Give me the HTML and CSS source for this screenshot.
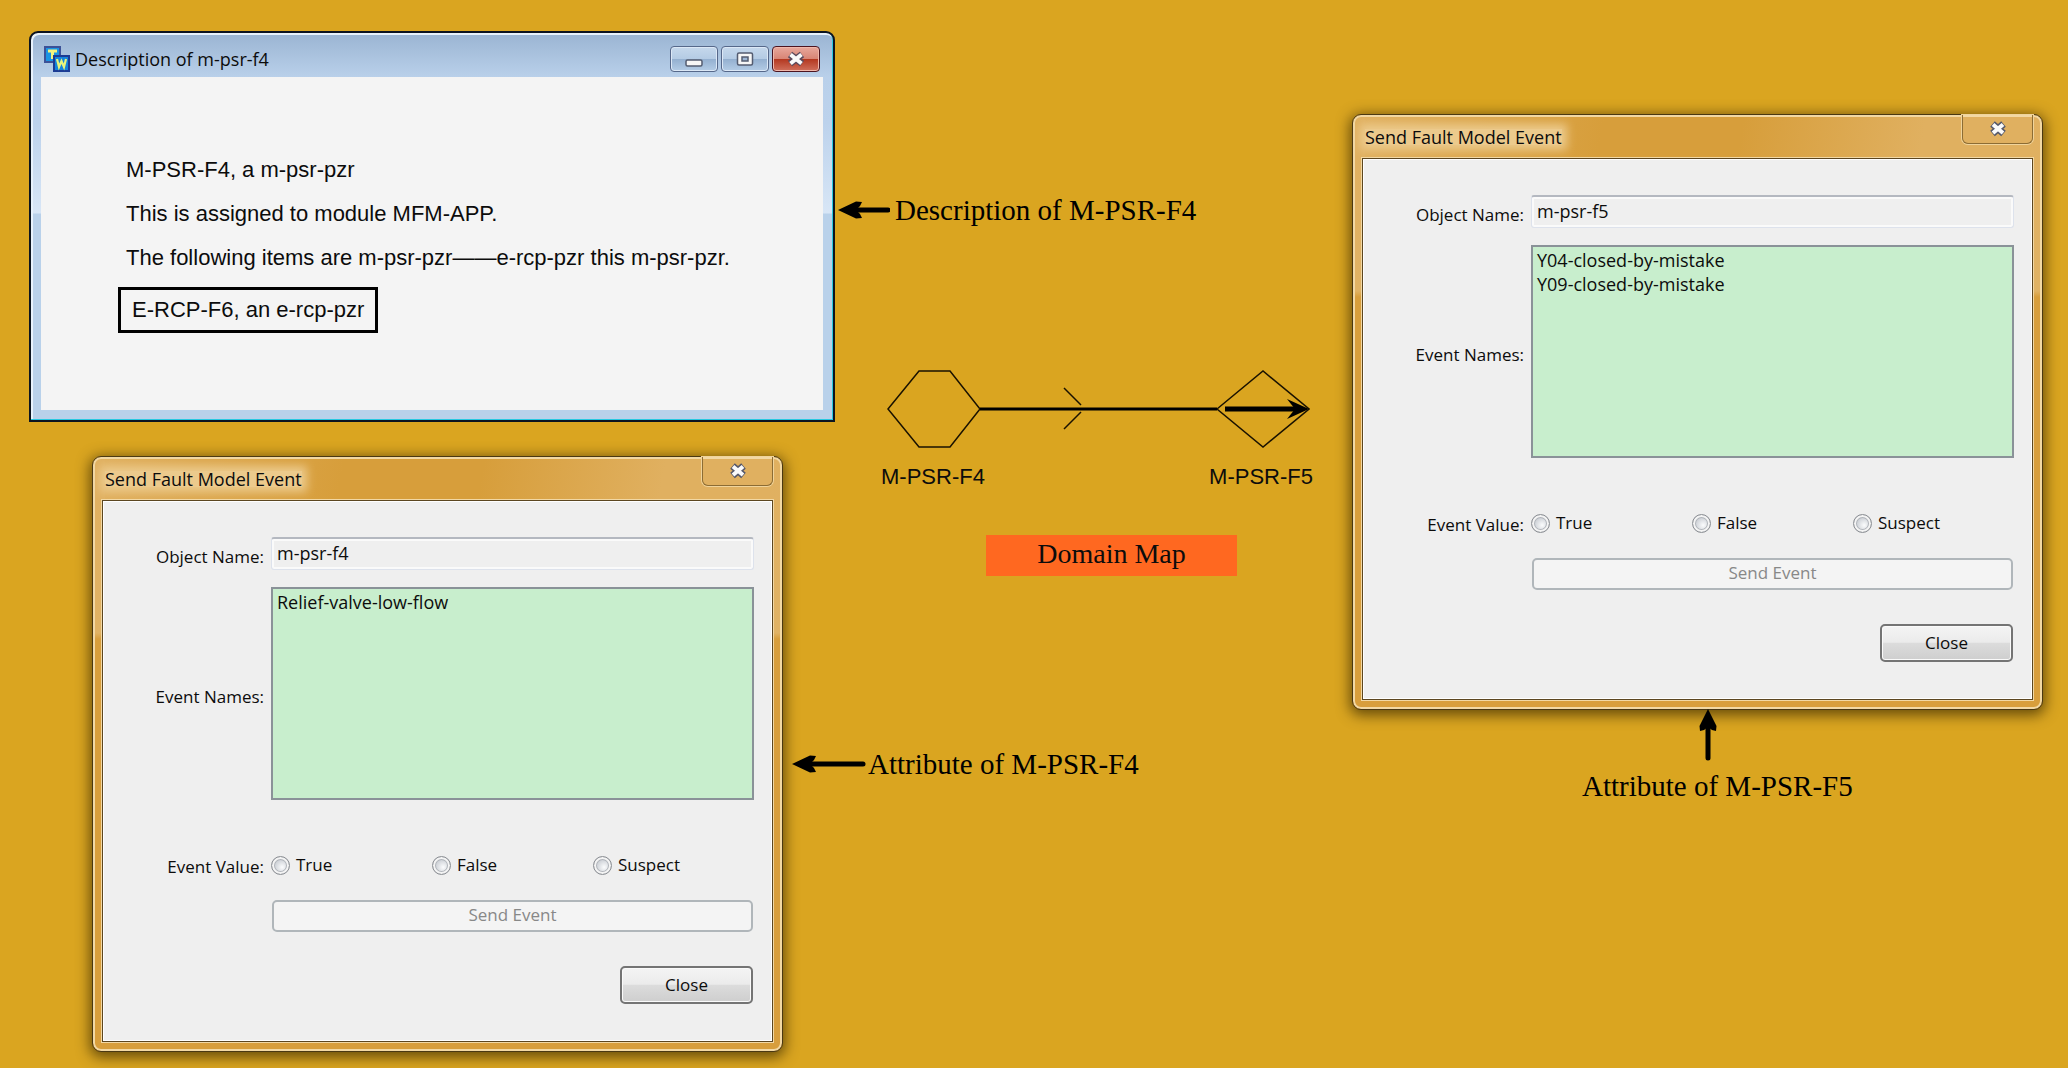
FILE: index.html
```html
<!DOCTYPE html>
<html lang="en">
<head>
<meta charset="utf-8">
<title>Domain Map</title>
<link rel="stylesheet" href="styles.css">
</head>
<body>
<main class="desktop">

  <section class="window window-description">
    <header class="window-bar">
      <svg class="app-icon" width="26" height="26" viewBox="0 0 26 26" aria-hidden="true">
        <rect x="1" y="1" width="15" height="15" fill="#1a94e4" stroke="#3c5298" stroke-width="2"/>
        <path d="M4 5h9M8.500 5v8" fill="none" stroke="#f4f47c" stroke-width="3"/>
        <rect x="10" y="10" width="15" height="15" fill="#1484dc" stroke="#1c3c94" stroke-width="2"/>
        <path d="M13 13l2 8 2.500-6 2.500 6 2-8" fill="none" stroke="#e8f47c" stroke-width="2.200"/>
      </svg>
      <h2 class="window-title">Description of m-psr-f4</h2>
      <div class="window-controls">
        <button class="control" type="button" aria-label="Minimize">
          <svg width="18" height="20" viewBox="0 0 18 20"><rect x="1" y="11" width="16" height="6" rx="1.500" fill="#f6f6f6" stroke="#545c70" stroke-width="1.500"/></svg>
        </button>
        <button class="control" type="button" aria-label="Maximize">
          <svg width="18" height="20" viewBox="0 0 18 20"><rect x="1.500" y="4" width="15" height="12" rx="1.500" fill="#f6f6f6" stroke="#545c70" stroke-width="1.500"/><rect x="6" y="8" width="6" height="4" fill="#9db6d4" stroke="#545c70" stroke-width="1.500"/></svg>
        </button>
        <button class="control control-close" type="button" aria-label="Close window">
          <svg width="20" height="20" viewBox="0 0 20 20"><path d="M4 5.500l12 9M16 5.500l-12 9" stroke="#5a4a5c" stroke-width="7"/><path d="M4.500 5.500l11 9M15.500 5.500l-11 9" stroke="#fafafa" stroke-width="4"/></svg>
        </button>
      </div>
    </header>
    <div class="description-body">
      <p>M-PSR-F4, a m-psr-pzr</p>
      <p>This is assigned to module MFM-APP.</p>
      <p>The following items are m-psr-pzr——e-rcp-pzr this m-psr-pzr.</p>
      <p class="boxed">E-RCP-F6, an e-rcp-pzr</p>
    </div>
  </section>

  <section class="dialog dialog-f4">
    <header class="dialog-bar">
      <h2 class="dialog-title">Send Fault Model Event</h2>
      <button class="dialog-x" type="button" aria-label="Close dialog">
        <svg width="20" height="18" viewBox="0 0 20 18"><path d="M4.500 4l11 9.500M15.500 4l-11 9.500" stroke="#55586a" stroke-width="7"/><path d="M5 4.500l10 8.500M15 4.500l-10 8.500" stroke="#fafafa" stroke-width="4"/></svg>
      </button>
    </header>
    <form class="dialog-form">
      <label class="name-label" for="name-f4">Object Name:</label>
      <input class="name-input" id="name-f4" type="text" value="m-psr-f4" readonly>
      <label class="events-label" for="events-f4">Event Names:</label>
      <select class="events-list" id="events-f4" size="9">
        <option>Relief-valve-low-flow</option>
      </select>
      <span class="value-label" id="value-f4">Event Value:</span>
      <div class="value-options" role="radiogroup" aria-labelledby="value-f4">
        <label><input type="radio" name="value-f4">True</label>
        <label><input type="radio" name="value-f4">False</label>
        <label><input type="radio" name="value-f4">Suspect</label>
      </div>
      <button class="send-button" type="button" disabled>Send Event</button>
      <button class="close-button" type="button">Close</button>
    </form>
  </section>

  <section class="dialog dialog-f5">
    <header class="dialog-bar">
      <h2 class="dialog-title">Send Fault Model Event</h2>
      <button class="dialog-x" type="button" aria-label="Close dialog">
        <svg width="20" height="18" viewBox="0 0 20 18"><path d="M4.500 4l11 9.500M15.500 4l-11 9.500" stroke="#55586a" stroke-width="7"/><path d="M5 4.500l10 8.500M15 4.500l-10 8.500" stroke="#fafafa" stroke-width="4"/></svg>
      </button>
    </header>
    <form class="dialog-form">
      <label class="name-label" for="name-f5">Object Name:</label>
      <input class="name-input" id="name-f5" type="text" value="m-psr-f5" readonly>
      <label class="events-label" for="events-f5">Event Names:</label>
      <select class="events-list" id="events-f5" size="9">
        <option>Y04-closed-by-mistake</option>
        <option>Y09-closed-by-mistake</option>
      </select>
      <span class="value-label" id="value-f5">Event Value:</span>
      <div class="value-options" role="radiogroup" aria-labelledby="value-f5">
        <label><input type="radio" name="value-f5">True</label>
        <label><input type="radio" name="value-f5">False</label>
        <label><input type="radio" name="value-f5">Suspect</label>
      </div>
      <button class="send-button" type="button" disabled>Send Event</button>
      <button class="close-button" type="button">Close</button>
    </form>
  </section>

  <figure class="map">
    <svg class="map-drawing" width="424" height="80" viewBox="0 0 424 80" aria-hidden="true">
      <g fill="none" stroke="#1a1200" stroke-width="1.500">
        <path d="M2 40L33 2H64L94 40L64 78H33Z"/>
        <path d="M178 19l17 17M195 43l-17 17"/>
        <path d="M331 40L377 2L423 40L377 78Z"/>
      </g>
      <path d="M94 40H331" stroke="#000" stroke-width="3"/>
      <path d="M339 40H414" stroke="#000" stroke-width="5"/>
      <path d="M401 30L423 40L401 50L409 40Z"/>
    </svg>
    <div class="map-labels"><span>M-PSR-F4</span><span>M-PSR-F5</span></div>
    <figcaption class="map-caption">Domain Map</figcaption>
  </figure>

  <div class="note note-description">
    <svg width="52" height="20" viewBox="0 0 52 20" aria-hidden="true"><path d="M16 10H50" stroke="#000" stroke-width="5" stroke-linecap="round"/><path d="M0 10L18 1.500L24 2L22 6L18 10L22 14L24 18L18 18.500Z"/></svg>
    <span>Description of M-PSR-F4</span>
  </div>
  <div class="note note-f4">
    <svg width="74" height="20" viewBox="0 0 74 20" aria-hidden="true"><path d="M16 10H71" stroke="#000" stroke-width="5" stroke-linecap="round"/><path d="M0 10L18 1.500L24 2L22 6L18 10L22 14L24 18L18 18.500Z"/></svg>
    <span>Attribute of M-PSR-F4</span>
  </div>
  <div class="note note-f5">
    <svg width="20" height="52" viewBox="0 0 20 52" aria-hidden="true"><path d="M10 16V49" stroke="#000" stroke-width="5" stroke-linecap="round"/><path d="M10 0L1.500 17L2 22L6 21L10 18L14 21L18 22L18.500 17Z"/></svg>
    <span>Attribute of M-PSR-F5</span>
  </div>

</main>
</body>
</html>
```
FILE: styles.css
```css
* { box-sizing: border-box; }

body {
  margin: 0;
  background: #daa520;
  color: #0c0c0c;
  font: 17px/24px "Open Sans", "Noto Sans", sans-serif;
}

h2, p, figure { margin: 0; }
svg { display: block; flex: none; }
button, input, select { font: inherit; color: inherit; }

.desktop {
  position: relative;
  min-height: 100vh;
  overflow: hidden;
}

/* Free-floating windows on the desktop */
.window, .dialog, .map, .note { position: absolute; }

.window {
  width: 806px;
  padding: 0 10px 10px;
  border: 2px solid #0c1420;
  border-radius: 9px 9px 0 0;
  background: linear-gradient(#9ab4d2, #b9d0ea 44px, #bcd2ec 90px, #d8e6f6 180px, #b9d1ea 181px);
  box-shadow: inset -1px -1px 0 #28c8e0, inset 1px 1px 0 1px #e8f2fc;
}
.window-description { left: 29px; top: 31px; }

.window-bar {
  display: flex;
  align-items: center;
  height: 44px;
  padding: 7px 3px 0;
}
.app-icon { margin-right: 5px; }
.window-title { font-size: 18px; font-weight: 400; }
.window-controls { display: flex; gap: 3px; margin-left: auto; }
.control {
  display: flex;
  justify-content: center;
  align-items: center;
  width: 48px;
  height: 26px;
  padding: 0;
  border: 1px solid #56688a;
  border-radius: 4px;
  background: linear-gradient(#c6d8ec, #b4cbe4 50%, #94b0d0 51%, #b4cce6);
  box-shadow: inset 0 0 0 1px #dce8f6;
}
.control-close {
  border-color: #4c1420;
  background: linear-gradient(#e8a89c, #d88474 50%, #b43820 51%, #d0705c);
  box-shadow: inset 0 0 0 1px #f0b8ac;
}

.description-body {
  height: 333px;
  padding: 71px 85px;
  background: #f4f4f4;
  font: 22px/44px "Liberation Sans", Arial, sans-serif;
  white-space: nowrap;
}
.boxed {
  width: fit-content;
  height: 46px;
  margin: 7px 0 0 -8px;
  padding: 0 11px;
  border: 3px solid #000;
  line-height: 40px;
}

.dialog {
  width: 691px;
  padding: 0 9px 9px;
  border: 1px solid #4a3812;
  border-radius: 9px;
  background:
    linear-gradient(#e0b060, #e0b264 176px, #d89e3c 182px) left / 12px 100% no-repeat,
    linear-gradient(#e0b060, #e0b264 176px, #d89e3c 182px) right / 12px 100% no-repeat,
    linear-gradient(100deg, #e0b060, #d79e3b 36%, #d79e3b 56%, #e0b060 82%) top / 100% 60px no-repeat,
    #d89e3c;
  box-shadow: inset 0 0 0 2px #f2d8a4, 0 3px 14px 2px rgba(50, 35, 0, .7);
}
.dialog-f4 { left: 92px; top: 456px; }
.dialog-f5 { left: 1352px; top: 114px; }

.dialog-bar {
  display: flex;
  justify-content: space-between;
  align-items: flex-start;
  height: 43px;
}
.dialog-title {
  margin: 14px 3px 0;
  background: #ecca8c;
  box-shadow: 0 0 10px 5px #ecca8c;
  font-size: 18px;
  font-weight: 400;
  line-height: 16px;
}
.dialog-x {
  display: flex;
  justify-content: center;
  width: 71px;
  height: 29px;
  padding: 5px 0 0;
  border: 1px solid #8c6c34;
  border-top: 0;
  border-radius: 0 0 6px 6px;
  background: transparent;
  box-shadow: 0 0 0 1px #f0d49c;
}

.dialog-form {
  position: relative;
  display: grid;
  grid-template-columns: 161px 483px;
  grid-template-rows: 33px 213px 30px 32px 38px;
  column-gap: 7px;
  align-content: start;
  height: 542px;
  padding: 36px 0 0;
  border: 1px solid #5c4620;
  outline: 1px solid #f2d8a4;
  background: #efefef;
  box-shadow: inset 0 0 0 1px #fff;
}
.name-label, .events-label, .value-label { justify-self: end; align-self: center; }
.name-label { padding-top: 7px; }
.name-input {
  width: 100%;
  padding: 0 5px 2px;
  border: 1px solid #dde2ec;
  border-top: 2px solid #b4b8c0;
  border-radius: 3px;
  background: #efefef;
  box-shadow: inset 0 0 0 2px #fafafa;
  font-size: 18px;
}
.events-label { grid-row: 2; margin-top: 40px; }
.events-list {
  grid-row: 2;
  height: 213px;
  margin-top: 17px;
  padding: 1px 0;
  overflow: hidden;
  border: 2px solid #8a9298;
  border-radius: 0;
  background: #c8eecd;
  font-size: 18px;
}
.events-list option { min-height: 23px; padding: 0 4px; line-height: 23px; }
.value-label { grid-row: 3; align-self: start; margin-top: 72px; }
.value-options {
  grid-row: 3;
  display: grid;
  grid-template-columns: 161px 161px 161px;
  align-items: center;
  height: 30px;
  margin-top: 67px;
}
.value-options label { display: flex; align-items: center; gap: 6px; }
.value-options input {
  appearance: none;
  width: 19px;
  height: 19px;
  margin: 0;
  border: 1px solid #8c8f94;
  border-radius: 50%;
  background: radial-gradient(circle at 60% 60%, #fbfcfd, #c8ccd2 60%);
  box-shadow: inset 0 0 0 2px #f4f4f4, inset 0 0 0 3px #b0b4ba;
}
.send-button {
  grid-column: 2;
  height: 32px;
  margin: 87px 1px 0;
  padding: 0 0 2px;
  border: 2px solid #b0b6ba;
  border-radius: 5px;
  background: #f4f4f4;
  color: #888;
}
.close-button {
  grid-column: 2;
  justify-self: end;
  width: 133px;
  height: 38px;
  margin: 121px 1px 0;
  padding: 0 0 1px;
  border: 2px solid #747474;
  border-radius: 5px;
  background: linear-gradient(#f4f4f4, #ebebeb 48%, #dcdcdc 50%, #cecece);
  box-shadow: inset 0 0 0 1px #fafafa;
}

.map { left: 886px; top: 369px; width: 424px; }
.map-labels {
  display: flex;
  justify-content: space-between;
  margin: 16px -3px 0 -5px;
  font: 22px/24px "Liberation Sans", Arial, sans-serif;
}
.map-caption {
  width: 251px;
  margin: 46px 0 0 100px;
  padding-bottom: 3px;
  background: #ff6820;
  font: 28px/38px "Liberation Serif", "Times New Roman", serif;
  text-align: center;
}

.note {
  display: flex;
  align-items: center;
  color: #000;
  font: 29px/34px "Liberation Serif", "Times New Roman", serif;
  white-space: nowrap;
}
.note-description { left: 838px; top: 193px; gap: 5px; }
.note-f4 { left: 792px; top: 747px; gap: 2px; }
.note-f5 { left: 1582px; top: 709px; flex-direction: column; align-items: flex-start; gap: 8px; }
.note-f5 svg { margin-left: 116px; }
```
